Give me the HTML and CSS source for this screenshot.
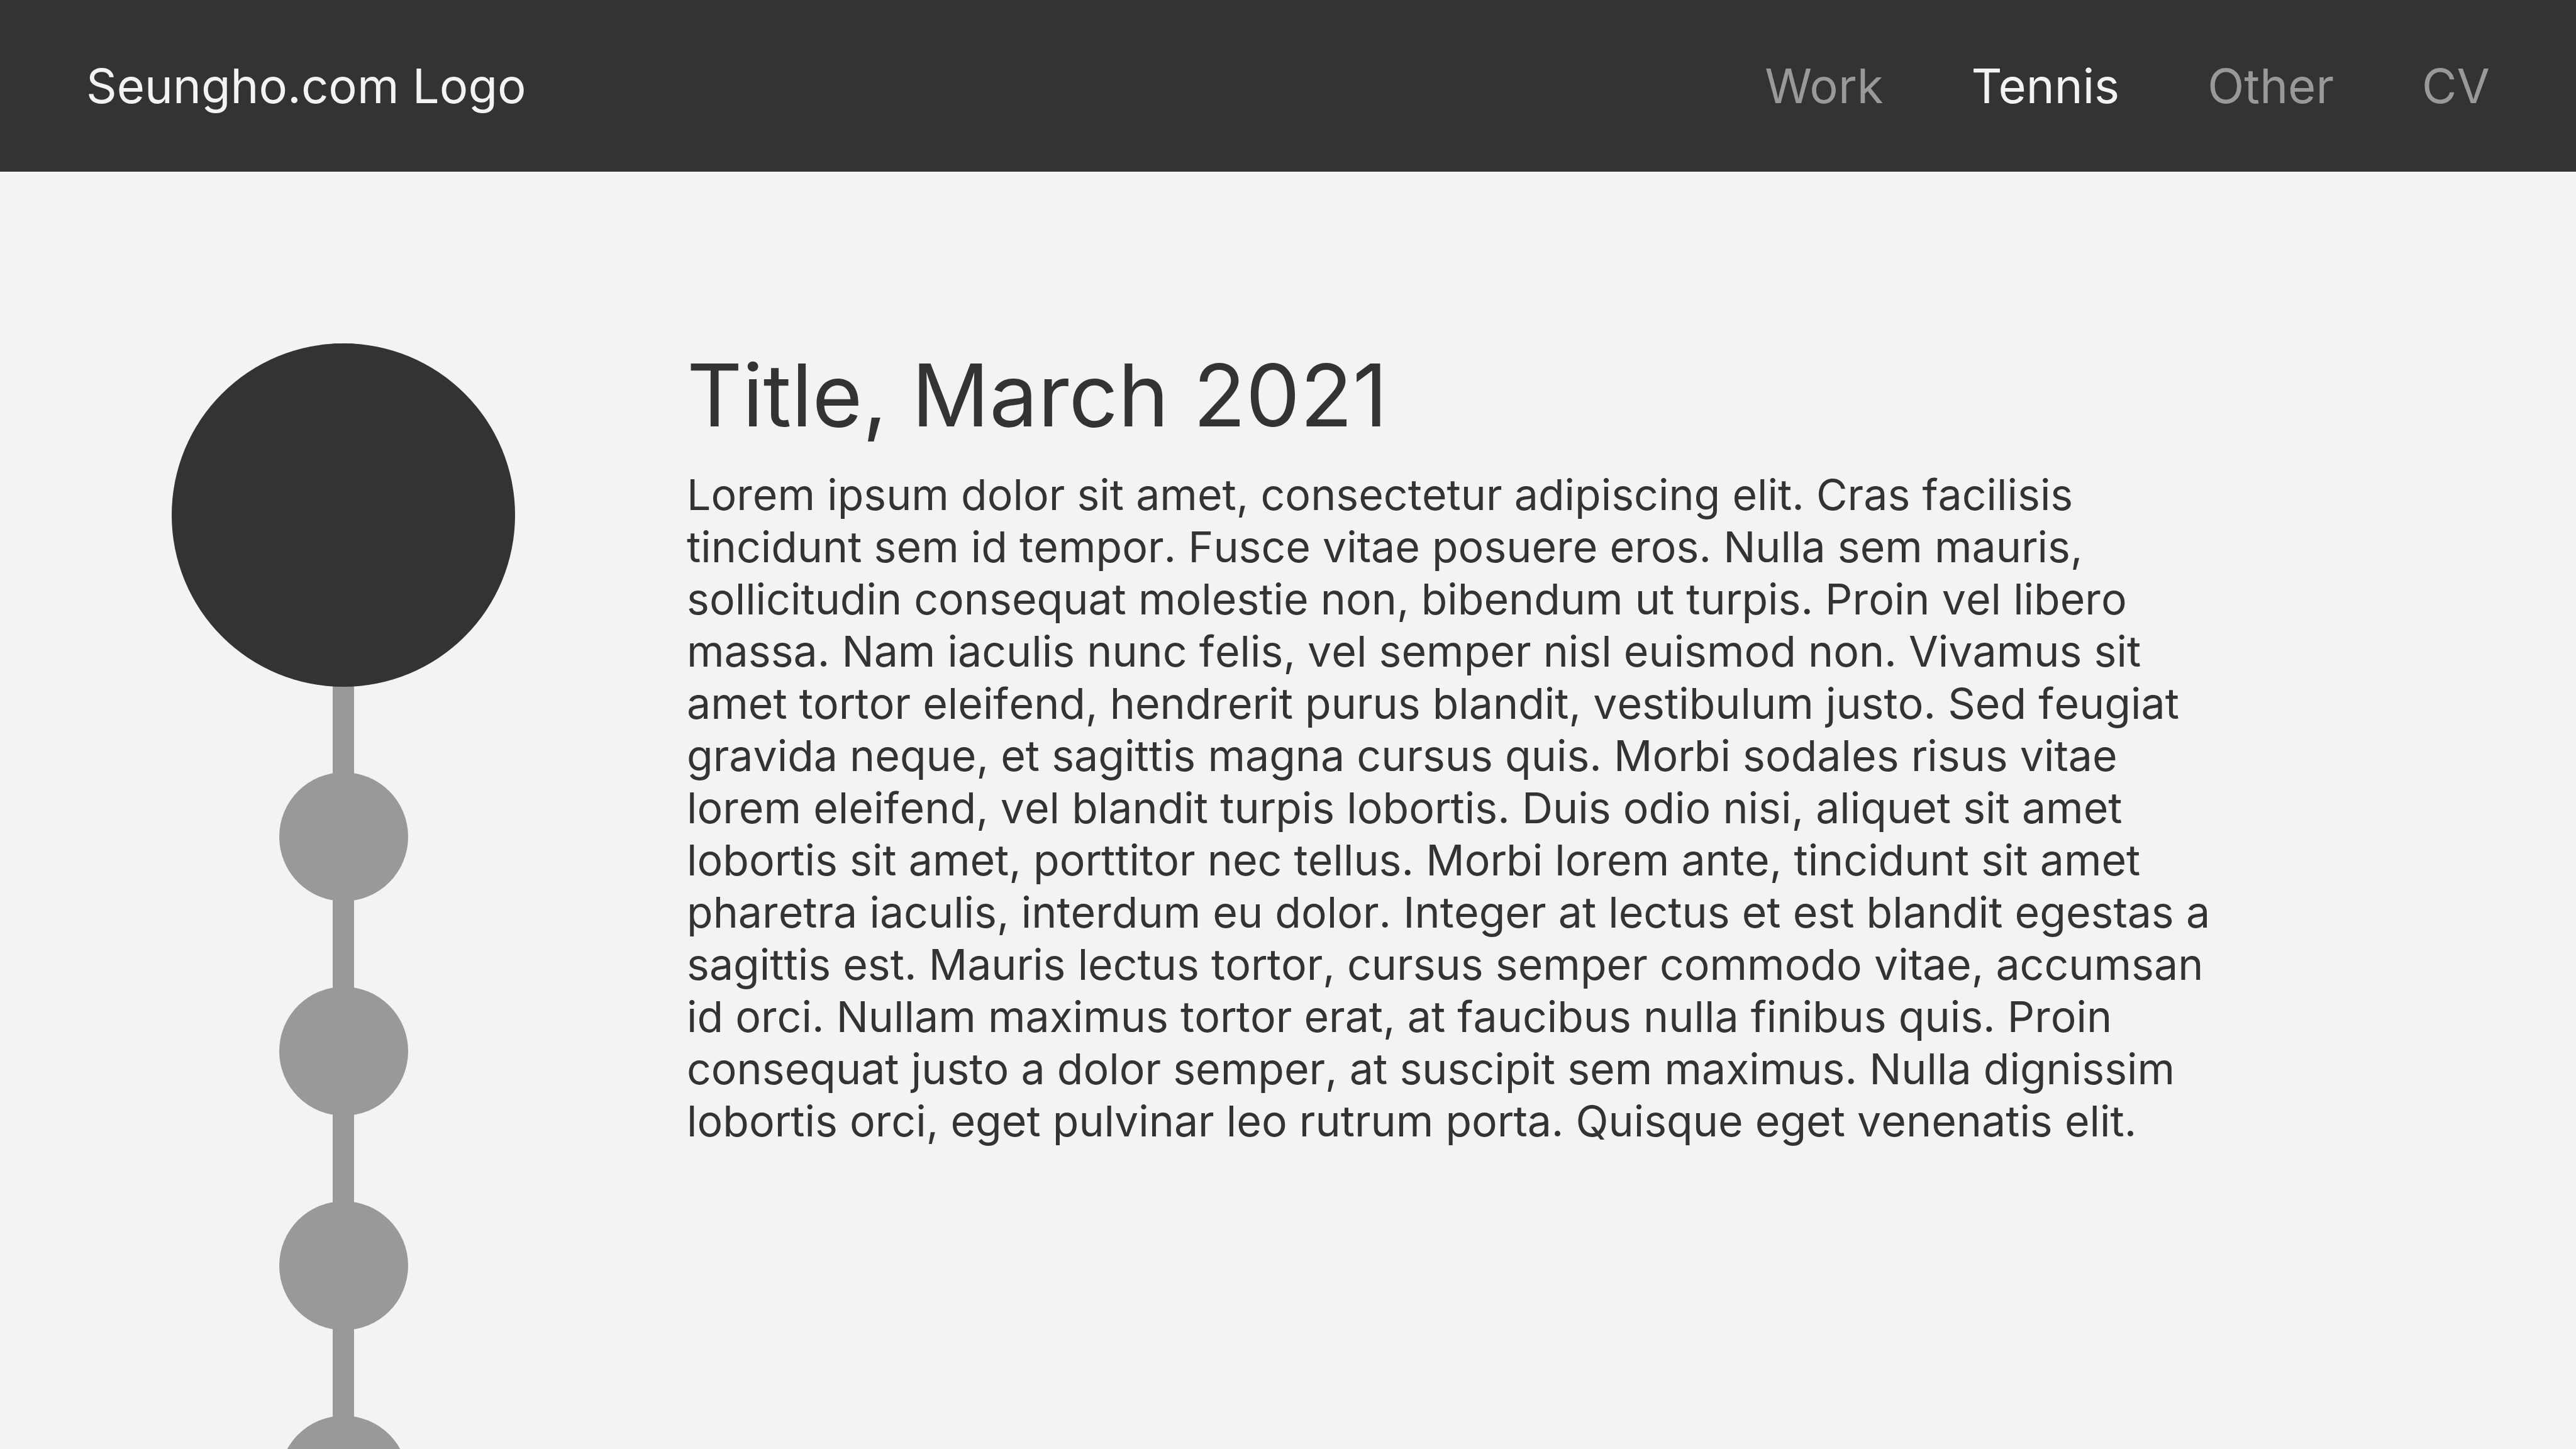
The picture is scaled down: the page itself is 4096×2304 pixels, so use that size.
FILE: index.html
```html
<!DOCTYPE html>
<html lang="en">
<head>
  <meta charset="utf-8">
  <meta name="viewport" content="width=device-width, initial-scale=1">
  <title>Seungho.com – Tennis</title>
  <link rel="stylesheet" href="styles.css">
</head>
<body class="page">
  <header class="header">
    <a class="logo" href="#home">Seungho.com Logo</a>
    <nav class="nav" aria-label="Main">
      <a class="nav-link" href="#work">Work</a>
      <a class="nav-link nav-link-active" href="#tennis" aria-current="page">Tennis</a>
      <a class="nav-link" href="#other">Other</a>
      <a class="nav-link" href="#cv">CV</a>
    </nav>
  </header>
  <main class="content">
    <ol class="timeline">
      <li class="stop"><a class="dot dot-current" href="#entry-1" aria-label="Entry 1" aria-current="true"></a></li>
      <li class="stop"><a class="dot" href="#entry-2" aria-label="Entry 2"></a></li>
      <li class="stop"><a class="dot" href="#entry-3" aria-label="Entry 3"></a></li>
      <li class="stop"><a class="dot" href="#entry-4" aria-label="Entry 4"></a></li>
      <li class="stop"><a class="dot" href="#entry-5" aria-label="Entry 5"></a></li>
    </ol>
    <article class="entry" id="entry-1">
      <h1 class="entry-title">Title, March 2021</h1>
      <p class="entry-text">Lorem ipsum dolor sit amet, consectetur adipiscing elit. Cras facilisis tincidunt sem id tempor. Fusce vitae posuere eros. Nulla sem mauris, sollicitudin consequat molestie non, bibendum ut turpis. Proin vel libero massa. Nam iaculis nunc felis, vel semper nisl euismod non. Vivamus sit amet tortor eleifend, hendrerit purus blandit, vestibulum justo. Sed feugiat gravida neque, et sagittis magna cursus quis. Morbi sodales risus vitae lorem eleifend, vel blandit turpis lobortis. Duis odio nisi, aliquet sit amet lobortis sit amet, porttitor nec tellus. Morbi lorem ante, tincidunt sit amet pharetra iaculis, interdum eu dolor. Integer at lectus et est blandit egestas a sagittis est. Mauris lectus tortor, cursus semper commodo vitae, accumsan id orci. Nullam maximus tortor erat, at faucibus nulla finibus quis. Proin consequat justo a dolor semper, at suscipit sem maximus. Nulla dignissim lobortis orci, eget pulvinar leo rutrum porta. Quisque eget venenatis elit.</p>
    </article>
  </main>
</body>
</html>
```
FILE: styles.css
```css
:root {
  --dark: #333333;
  --mid: #999999;
  --light: #f3f3f3;
}

* {
  box-sizing: border-box;
}

.page {
  display: flex;
  flex-direction: column;
  height: 100vh;
  margin: 0;
  background: var(--light);
  color: var(--dark);
  font-family: Inter, "Liberation Sans", sans-serif;
}

.header {
  display: flex;
  flex: none;
  align-items: center;
  justify-content: space-between;
  padding: 90px 137px;
  background: var(--dark);
  font-size: 76px;
  line-height: 93px;
}

.logo {
  color: var(--light);
  text-decoration: none;
}

.nav {
  display: flex;
  gap: 140px;
}

.nav-link {
  color: var(--mid);
  text-decoration: none;
}

.nav-link-active {
  color: var(--light);
}

/* The entries scroll under the fixed header. */
.content {
  display: flex;
  flex: 1;
  align-items: flex-start;
  gap: 273px;
  min-height: 0;
  padding: 273px 546px 0 273px;
  overflow-y: auto;
  scrollbar-width: none;
}

/* The vertical bar runs behind all of the dots. */
.timeline {
  display: flex;
  flex: none;
  flex-direction: column;
  align-items: center;
  gap: 136px;
  margin: 0;
  padding: 0;
  background: linear-gradient(var(--mid), var(--mid)) center / 34px 100% no-repeat;
  list-style: none;
}

.dot {
  display: block;
  width: 205px;
  height: 205px;
  border-radius: 50%;
  background: var(--mid);
}

.dot-current {
  width: 546px;
  height: 546px;
  background: var(--dark);
}

.entry {
  flex: 1;
  min-width: 0;
}

.entry-title {
  margin: 0 0 34px;
  font-size: 137px;
  font-weight: 400;
  line-height: 165px;
}

.entry-text {
  margin: 0;
  font-size: 68px;
  font-kerning: none;
  line-height: 83px;
}
```
